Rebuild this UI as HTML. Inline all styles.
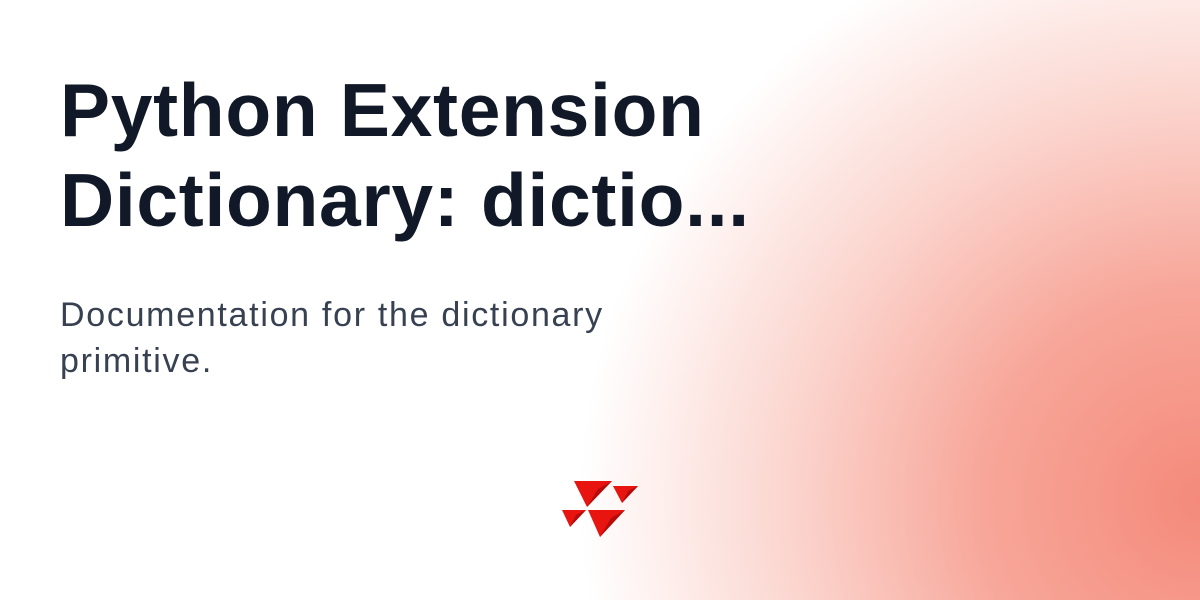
<!DOCTYPE html>
<html><head><style>
body{margin:0;width:1200px;height:600px;overflow:hidden;background:#fff;font-family:"Liberation Sans",sans-serif;position:relative}
.bg{position:absolute;inset:0;background:radial-gradient(ellipse 620px 600px at 1200px 500px,#f48a7b 0%,#f7a699 35%,#fbd3cc 65%,rgba(255,255,255,0) 100%)}
h1{position:absolute;left:60px;top:65px;margin:0;font-size:75px;line-height:90px;font-weight:700;color:#111827;letter-spacing:0.7px;white-space:nowrap}
p{position:absolute;left:60px;top:292px;margin:0;font-size:34px;line-height:46px;color:#374151;letter-spacing:1.7px;white-space:nowrap}
svg{position:absolute;left:0;top:0}
</style></head><body>
<div class="bg"></div>
<h1>Python Extension<br>Dictionary: dictio...</h1>
<p>Documentation for the dictionary<br>primitive.</p>
<svg width="1200" height="600">
<polygon points="574,481 612,481 587,507" fill="#e8140f"/><polygon points="612,481 598,489 587,507" fill="#b50b0b"/>
<polygon points="613,486 638,486 622,503" fill="#e8140f"/><polygon points="638,486 628,491 622,503" fill="#b50b0b"/>
<polygon points="562,510 586,510 570,527" fill="#e8140f"/><polygon points="586,510 576,515 570,527" fill="#b50b0b"/>
<polygon points="588,510 625,510 600,537" fill="#e8140f"/><polygon points="625,510 611,518 600,537" fill="#b50b0b"/>
</svg>
</body></html>
